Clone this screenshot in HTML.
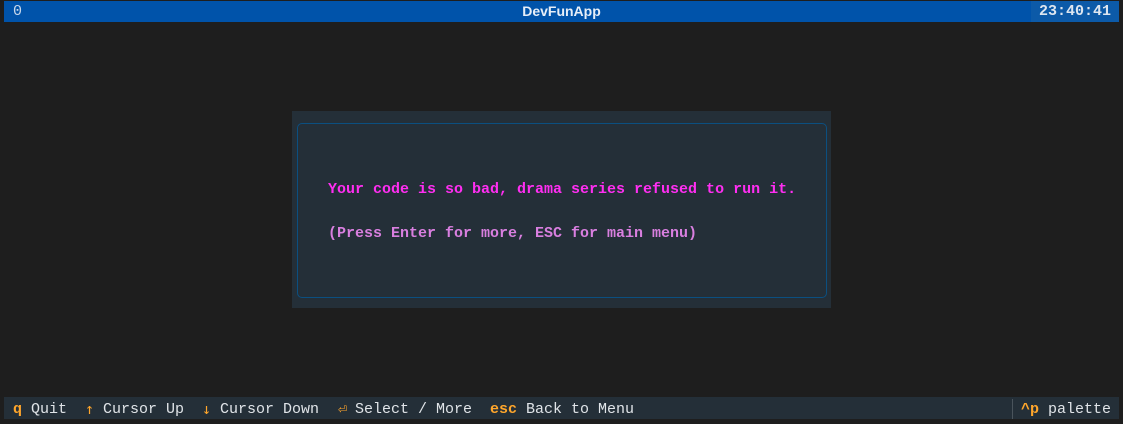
<!DOCTYPE html>
<html><head><meta charset="utf-8"><style>
body{margin:0;width:1123px;height:424px;background:#1e1e1e;overflow:hidden;position:relative;font-family:"Liberation Mono",monospace;font-size:15px;}
div{position:absolute;white-space:pre;}
.hdr{left:4px;top:1px;width:1115px;height:21px;background:#0053aa;color:#dde6f0;}
.t{line-height:21px;}
.k{color:#ffa62b;font-weight:bold;}
.a{color:#ffa62b;font-family:"DejaVu Sans Mono",monospace;}
</style></head><body>
<div class="hdr"></div>
<div class="t" style="left:13px;top:1px;color:#c8d8ec;">0</div>
<div class="t" style="left:0;width:1123px;top:1px;text-align:center;color:#e6eef8;font-weight:bold;font-family:'Liberation Sans',sans-serif;font-size:14px;">DevFunApp</div>
<div style="left:1031px;top:1px;width:88px;height:21px;background:#0c5aa8;"></div>
<div class="t" style="left:1039px;top:1px;color:#dde6f0;font-weight:bold;">23:40:41</div>

<div style="left:292px;top:111px;width:539px;height:197px;background:#242f38;"></div>
<div style="left:297px;top:123px;width:528px;height:173px;border:1px solid #0b4f80;border-radius:5px;"></div>
<div class="t" style="left:328px;top:179px;color:#ff2ef2;font-weight:bold;">Your code is so bad, drama series refused to run it.</div>
<div class="t" style="left:328px;top:223px;color:#d97fe0;font-weight:bold;">(Press Enter for more, ESC for main menu)</div>

<div style="left:4px;top:397px;width:1115px;height:22px;background:#242f38;"></div>
<div style="left:1012px;top:399px;width:1px;height:20px;background:#4a545c;"></div>
<div class="t" style="left:13px;top:399px;color:#e0e4e8;"><span class="k">q</span> Quit</div>
<div class="t a" style="left:85px;top:399px;">↑</div>
<div class="t" style="left:103px;top:399px;color:#e0e4e8;">Cursor Up</div>
<div class="t a" style="left:202px;top:399px;">↓</div>
<div class="t" style="left:220px;top:399px;color:#e0e4e8;">Cursor Down</div>
<div class="t a" style="left:338px;top:399px;">⏎</div>
<div class="t" style="left:355px;top:399px;color:#e0e4e8;">Select / More</div>
<div class="t" style="left:490px;top:399px;color:#e0e4e8;"><span class="k">esc</span> Back to Menu</div>
<div class="t" style="left:1021px;top:399px;color:#e0e4e8;"><span class="k">^p</span> palette</div>
</body></html>
